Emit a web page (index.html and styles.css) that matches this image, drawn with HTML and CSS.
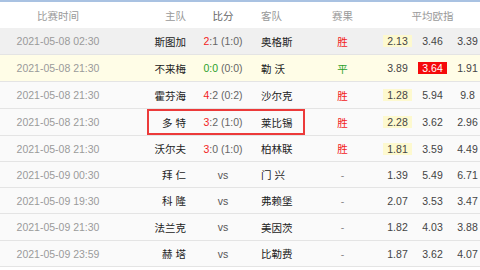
FILE: index.html
```html
<!DOCTYPE html>
<html lang="zh">
<head>
<meta charset="utf-8">
<link rel="stylesheet" href="styles.css">
</head>
<body>
<div class="table">
  <div class="row head">
    <div class="time">比赛时间</div>
    <div class="match">
      <div class="home">主队</div>
      <div class="score">比分</div>
      <div class="away">客队</div>
    </div>
    <div class="result">赛果</div>
    <div class="odds-head">平均欧指</div>
  </div>

  <div class="row r-gray">
    <div class="time">2021-05-08 02:30</div>
    <div class="match">
      <div class="home">斯图加</div>
      <div class="score"><span><span class="red">2</span>:1 (1:0)</span></div>
      <div class="away">奥格斯</div>
    </div>
    <div class="result red">胜</div>
    <div class="odd"><span class="hl-y">2.13</span></div>
    <div class="odd">3.46</div>
    <div class="odd">3.39</div>
  </div>

  <div class="row r-yellow">
    <div class="time">2021-05-08 21:30</div>
    <div class="match">
      <div class="home">不来梅</div>
      <div class="score"><span><span class="green">0:0</span> (0:0)</span></div>
      <div class="away">勒 沃</div>
    </div>
    <div class="result green">平</div>
    <div class="odd"><span class="pad">3.89</span></div>
    <div class="odd"><span class="hl-r">3.64</span></div>
    <div class="odd">1.91</div>
  </div>

  <div class="row">
    <div class="time">2021-05-08 21:30</div>
    <div class="match">
      <div class="home">霍芬海</div>
      <div class="score"><span><span class="red">4</span>:2 (0:2)</span></div>
      <div class="away">沙尔克</div>
    </div>
    <div class="result red">胜</div>
    <div class="odd"><span class="hl-y">1.28</span></div>
    <div class="odd">5.94</div>
    <div class="odd">9.8</div>
  </div>

  <div class="row">
    <div class="time">2021-05-08 21:30</div>
    <div class="match boxed">
      <div class="home">多 特</div>
      <div class="score"><span><span class="red">3</span>:2 (1:0)</span></div>
      <div class="away">莱比锡</div>
    </div>
    <div class="result red">胜</div>
    <div class="odd"><span class="hl-y">2.28</span></div>
    <div class="odd">3.62</div>
    <div class="odd">2.96</div>
  </div>

  <div class="row">
    <div class="time">2021-05-08 21:30</div>
    <div class="match">
      <div class="home">沃尔夫</div>
      <div class="score"><span><span class="red">3</span>:0 (1:0)</span></div>
      <div class="away">柏林联</div>
    </div>
    <div class="result red">胜</div>
    <div class="odd"><span class="hl-y">1.81</span></div>
    <div class="odd">3.59</div>
    <div class="odd">4.49</div>
  </div>

  <div class="row">
    <div class="time">2021-05-09 00:30</div>
    <div class="match">
      <div class="home">拜 仁</div>
      <div class="score vs">vs</div>
      <div class="away">门 兴</div>
    </div>
    <div class="result dash">-</div>
    <div class="odd">1.39</div>
    <div class="odd">5.49</div>
    <div class="odd">6.71</div>
  </div>

  <div class="row">
    <div class="time">2021-05-09 19:30</div>
    <div class="match">
      <div class="home">科 隆</div>
      <div class="score vs">vs</div>
      <div class="away">弗赖堡</div>
    </div>
    <div class="result dash">-</div>
    <div class="odd">2.07</div>
    <div class="odd">3.53</div>
    <div class="odd">3.47</div>
  </div>

  <div class="row">
    <div class="time">2021-05-09 21:30</div>
    <div class="match">
      <div class="home">法兰克</div>
      <div class="score vs">vs</div>
      <div class="away">美因茨</div>
    </div>
    <div class="result dash">-</div>
    <div class="odd">1.82</div>
    <div class="odd">4.03</div>
    <div class="odd">3.88</div>
  </div>

  <div class="row">
    <div class="time">2021-05-09 23:59</div>
    <div class="match">
      <div class="home">赫 塔</div>
      <div class="score vs">vs</div>
      <div class="away">比勒费</div>
    </div>
    <div class="result dash">-</div>
    <div class="odd">1.87</div>
    <div class="odd">3.62</div>
    <div class="odd">4.07</div>
  </div>
</div>
</body>
</html>
```

FILE: styles.css
```css
html, body {
  margin: 0;
  padding: 0;
  background: #ffffff;
  overflow: hidden;
}

body {
  width: 480px;
  height: 270px;
  font-family: "Liberation Sans", "Noto Sans CJK SC", sans-serif;
  font-size: 10.5px;
  color: #333333;
}

.table {
  width: 486px;
  border-top: 2px solid #a9c2e2;
}

.row {
  display: flex;
  align-items: stretch;
  height: 26px;
  border-bottom: 1px solid #e4e4e4;
  background: #fafafa;
}

.row:nth-child(n+6) {
  height: 25px;
}

.row:nth-child(9) {
  height: 26px;
}

.row > div,
.match > div {
  display: flex;
  align-items: center;
}

.head {
  height: 26px;
  background: #ffffff;
  border-bottom: none;
  color: #999999;
}

.r-gray { background: #f0f0f0; }
.r-yellow { background: #fffde7; }

.time {
  width: 116px;
  margin-right: 31px;
  justify-content: center;
  color: #9a9a9a;
}

.match {
  display: flex;
  width: 158px;
  box-sizing: border-box;
  border: 2px solid transparent;
}

.match.boxed {
  border-color: #ec3a3a;
}

.home {
  width: 37px;
  justify-content: flex-end;
  color: #222222;
}

.head .home,
.head .away { color: #999999; }

.score {
  width: 74px;
  justify-content: center;
  color: #666666;
  white-space: pre;
}

.away {
  width: 43px;
  padding-left: 1px;
  box-sizing: border-box;
  color: #222222;
}

.result {
  width: 75px;
  justify-content: center;
}

.odds-head {
  width: 105px;
  justify-content: center;
}

.odd {
  width: 35px;
  justify-content: center;
  color: #444444;
}

.red { color: #f22222; }
.green { color: #2aa02a; }
.vs { color: #555555; }
.dash { color: #888888; }

.hl-y,
.hl-r,
.pad {
  display: inline-block;
  padding: 0 4px;
  line-height: 12px;
}

.hl-y { background: #fdf9cf; }
.hl-r { background: #f50a0a; color: #ffffff; }
```
